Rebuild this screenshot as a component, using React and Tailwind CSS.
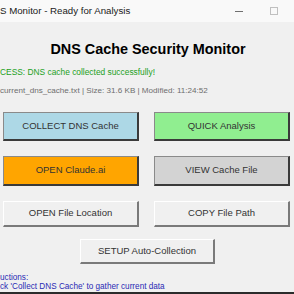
import React from 'react';

const font = { fontFamily: '"Liberation Sans", Arial, sans-serif' };

const Btn = ({ label, tone = 'default', className = '' }) => {
  const tones = {
    blue: 'bg-[#add8e6] border-t-[#8a8a8a] border-l-[#8a8a8a] border-b-[#3a3a3a] border-r-[#3a3a3a]',
    green: 'bg-[#90ee90] border-t-[#8a8a8a] border-l-[#8a8a8a] border-b-[#3a3a3a] border-r-[#3a3a3a]',
    orange: 'bg-[#ffa500] border-t-[#8a8a8a] border-l-[#8a8a8a] border-b-[#3a3a3a] border-r-[#3a3a3a]',
    gray: 'bg-[#d3d3d3] border-t-[#8a8a8a] border-l-[#8a8a8a] border-b-[#3a3a3a] border-r-[#3a3a3a]',
    default: 'bg-[#f0f0f0] border-t-white border-l-white border-b-[#7a7a7a] border-r-[#7a7a7a]',
  };
  return (
    <div
      className={`flex items-center justify-center border-t border-l border-r-2 border-b-2 text-[9.5px] text-[#333333] ${tones[tone]} ${className}`}
    >
      {label}
    </div>
  );
};

export default function App() {
  return (
    <div style={font} className="w-[294px] h-[294px] overflow-hidden bg-[#f0f0f0] flex flex-col">
      {/* title bar */}
      <div className="h-[22px] bg-[#f9f9f9] flex items-center shrink-0">
        <span className="text-[9.7px] text-[#1a1a1a] whitespace-nowrap leading-none">S Monitor - Ready for Analysis</span>
        <div className="flex-1" />
        <div className="w-[8px] h-px bg-[#6f6f6f] mr-[27px]" />
        <div className="w-[8px] h-[8px] border border-[#c0c0c0] mr-[16px]" />
      </div>

      <div className="h-[19px] shrink-0" />
      <div className="text-[14.4px] font-bold text-black leading-[16px] text-center pl-[2px] whitespace-nowrap">
        DNS Cache Security Monitor
      </div>

      <div className="mt-[9px] text-[8.4px] leading-[12px] text-[#22a022] whitespace-nowrap">
        CESS: DNS cache collected successfully!
      </div>
      <div className="mt-[7px] text-[8.1px] leading-[12px] text-[#6e6e6e] whitespace-nowrap">
        current_dns_cache.txt | Size: 31.6 KB | Modified: 11:24:52
      </div>

      <div className="mt-[15px] pl-[3px] w-[290px] grid grid-cols-2 gap-x-[15px] gap-y-[15px]">
        <Btn label="COLLECT DNS Cache" tone="blue" className="h-[29px]" />
        <Btn label="QUICK Analysis" tone="green" className="h-[29px]" />
        <Btn label="OPEN Claude.ai" tone="orange" className="h-[30px]" />
        <Btn label="VIEW Cache File" tone="gray" className="h-[30px]" />
        <Btn label="OPEN File Location" className="h-[26px]" />
        <Btn label="COPY File Path" className="h-[26px]" />
      </div>

      <div className="mt-[12px] flex justify-center pl-[1px]">
        <Btn label="SETUP Auto-Collection" className="h-[25px] w-[135px]" />
      </div>

      <div className="mt-[9px] text-[8.2px] leading-[9px] text-[#2a2ab4] whitespace-nowrap">
        <div>uctions:</div>
        <div>ck 'Collect DNS Cache' to gather current data</div>
      </div>
      <div className="flex-1" />
      <div className="h-[2px] bg-[#2b2b2b] shrink-0" />
    </div>
  );
}
